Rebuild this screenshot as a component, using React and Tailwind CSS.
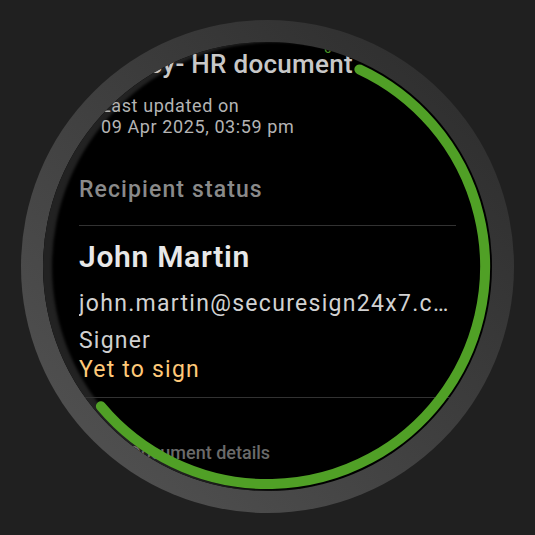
const Divider = ({ className }) => <div className={`h-px bg-[#323232] ${className}`} />;

const ProgressArc = () => (
  <svg className="pointer-events-none absolute inset-0" width="493" height="493" viewBox="0 0 493 493">
    <path
      d="M 338.4 49.4 A 217.5 217.5 0 1 1 79.9 386.3"
      fill="none"
      stroke="#50a026"
      strokeWidth="10"
      strokeLinecap="round"
    />
  </svg>
);

export default function App() {
  return (
    <div className="flex h-[535px] w-[535px] items-start justify-start bg-[#202020] pl-[21px] pt-[20px] font-[Roboto,sans-serif]">
      <div className="relative h-[493px] w-[493px] rounded-full bg-linear-to-tr from-[#555555] to-[#2a2a2a] p-[22px]">
        <div className="relative h-[449px] w-[449px] overflow-hidden rounded-full bg-black shadow-[inset_9px_0_3px_#222222]">
          <span className="absolute left-[281px] top-[-4px] text-[14px] text-[#4c9a28]">0%</span>

          <div className="flex flex-col px-[36px] pt-[7px]">
            <div className="mr-[103px] flex justify-end whitespace-nowrap">
              <span className="text-[26px] font-medium leading-[31px] tracking-[0.3px] text-[#c8c8c8]">
                Privacy- HR document
              </span>
            </div>

            <div className="mt-[15px] pl-[22px] text-[18px] leading-[21px] tracking-[0.6px] text-[#b4b4b4]">
              <div>Last updated on</div>
              <div>09 Apr 2025, 03:59 pm</div>
            </div>

            <div className="mt-[40px] text-[23px] font-medium leading-[26px] tracking-[1.1px] text-[#8a8a8a]">
              Recipient status
            </div>

            <Divider className="mt-[22px]" />

            <div className="mt-[14px] text-[30px] font-semibold leading-[34px] tracking-[0.7px] text-[#e8e8e8]">
              John Martin
            </div>
            <div className="mt-[17px] truncate text-[23px] leading-[26px] tracking-[1.3px] text-[#d2d2d2]">
              john.martin@securesign24x7.com
            </div>
            <div className="mt-[11px] text-[23px] leading-[26px] tracking-[1.2px] text-[#d0d0d0]">Signer</div>
            <div className="mt-[3px] text-[23px] leading-[26px] tracking-[1.2px] text-[#ffc978]">Yet to sign</div>

            <Divider className="mt-[14px]" />

            <div className="mt-[44px] pl-[50px] text-[18px] font-medium leading-[21px] text-[#6a6a6a]">
              Document details
            </div>
          </div>
        </div>
        <ProgressArc />
      </div>
    </div>
  );
}
